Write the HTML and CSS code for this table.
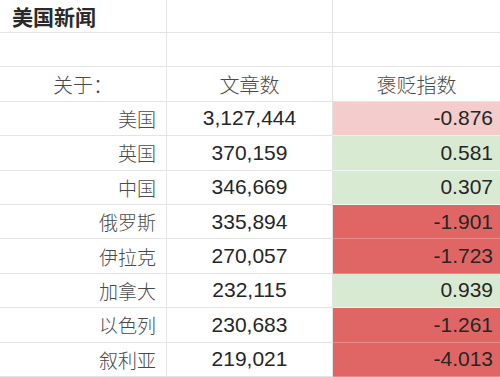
FILE: index.html
```html
<!DOCTYPE html>
<html lang="zh">
<head>
<meta charset="utf-8">
<link rel="stylesheet" href="styles.css">
</head>
<body>
<div class="sheet">
  <div class="cell title">美国新闻</div><div class="cell"></div><div class="cell last"></div>
  <div class="cell"></div><div class="cell"></div><div class="cell last"></div>
  <div class="cell head">关于：</div><div class="cell head">文章数</div><div class="cell head last">褒贬指数</div>

  <div class="cell name">美国</div><div class="cell count">3,127,444</div><div class="cell score pink last">-0.876</div>
  <div class="cell name">英国</div><div class="cell count">370,159</div><div class="cell score green last">0.581</div>
  <div class="cell name">中国</div><div class="cell count">346,669</div><div class="cell score green last">0.307</div>
  <div class="cell name">俄罗斯</div><div class="cell count">335,894</div><div class="cell score red last">-1.901</div>
  <div class="cell name">伊拉克</div><div class="cell count">270,057</div><div class="cell score red last">-1.723</div>
  <div class="cell name">加拿大</div><div class="cell count">232,115</div><div class="cell score green last">0.939</div>
  <div class="cell name">以色列</div><div class="cell count">230,683</div><div class="cell score red last">-1.261</div>
  <div class="cell name">叙利亚</div><div class="cell count">219,021</div><div class="cell score red last">-4.013</div>
</div>
</body>
</html>
```
FILE: styles.css
```css
html, body {
  margin: 0;
  padding: 0;
  background: #ffffff;
}
.sheet {
  display: grid;
  grid-template-columns: 167px 166px 167px;
  grid-template-rows: 33px repeat(10, 34.4px);
  width: 500px;
  height: 377px;
  overflow: hidden;
  font-family: "Liberation Sans", Arial, sans-serif;
}
.cell {
  box-sizing: border-box;
  border-right: 1px solid #e3e3e3;
  border-bottom: 1px solid #e3e3e3;
  display: flex;
  align-items: center;
  white-space: nowrap;
  overflow: hidden;
}
.cell.last {
  border-right: none;
}
.title {
  padding-left: 12px;
  font-family: "Noto Sans CJK SC", sans-serif;
  font-weight: 700;
  font-size: 21px;
  color: #2a2a2a;
}
.head {
  justify-content: center;
  font-family: "Noto Sans CJK SC", sans-serif;
  font-size: 20px;
  color: #4a4a4a;
  font-weight: 300;
}
.name {
  justify-content: flex-end;
  padding-right: 10px;
  font-family: "Noto Sans CJK SC", sans-serif;
  font-size: 19px;
  color: #4a4a4a;
  font-weight: 300;
}
.count {
  justify-content: center;
  font-size: 21px;
  color: #262626;
}
.score {
  justify-content: flex-end;
  padding-right: 7px;
  font-size: 21px;
  color: #262626;
  border-bottom-color: #f0f0f0;
}
.pink { background: #f4cccc; }
.green { background: #d9ead3; border-bottom-color: #eef5ec; }
.red { background: #e06666; border-bottom-color: #e88a8a; }
```
